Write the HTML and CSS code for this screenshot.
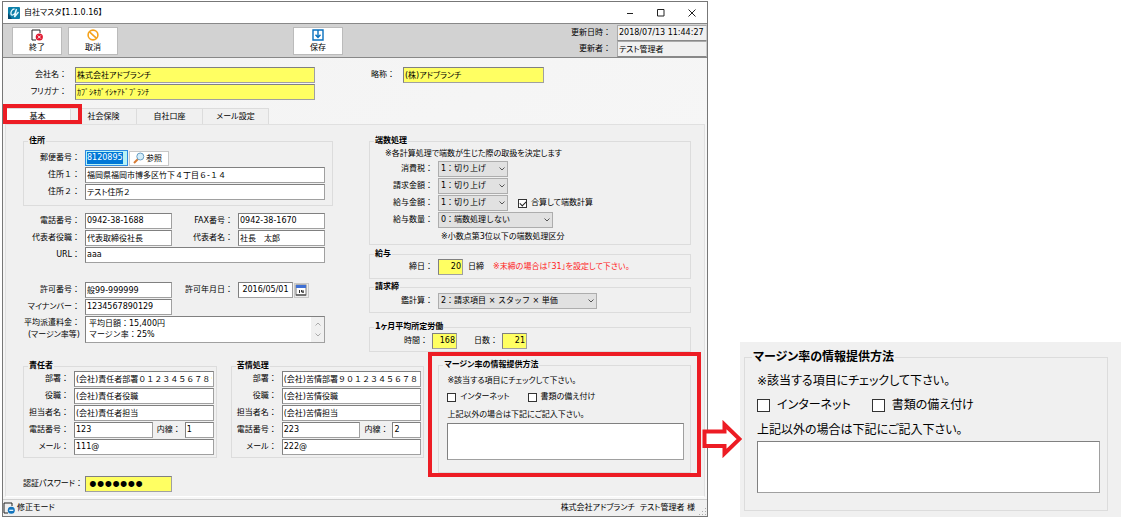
FILE: index.html
```html
<!DOCTYPE html>
<html lang="ja">
<head>
<meta charset="utf-8">
<title>自社マスタ</title>
<link rel="stylesheet" href="styles.css">
</head>
<body class="page">
<main class="window">
  <header class="titlebar">
    <svg class="app-icon" viewBox="0 0 12 12" aria-hidden="true"><rect width="12" height="12" rx="1" fill="#0b7fa9"/><path d="M0 12V6l4 6z" fill="#06496e"/><path d="M6.500 2C4 2 2.500 5 3 7s3 1 4-1l1.500-4L6.500 10l4-5" fill="none" stroke="#e4f7fd" stroke-width="1.300"/></svg>
    <h1 class="title kana">自社マスタ【1.1.0.16】</h1>
    <div class="win-buttons">
      <button class="win-button" aria-label="最小化"><svg viewBox="0 0 8 8"><path d="M1 4.5h6"/></svg></button>
      <button class="win-button" aria-label="最大化"><svg viewBox="0 0 8 8"><path d="M.5.5h6.5v6.5H.5z"/></svg></button>
      <button class="win-button" aria-label="閉じる"><svg viewBox="0 0 8 8"><path d="M.5.5l7 7M7.5.5l-7 7"/></svg></button>
    </div>
  </header>

  <div class="toolbar">
    <div class="tools">
      <button class="tool"><svg class="tool-icon" viewBox="0 0 12 12"><path d="M9 4V1H1v10h4" fill="none" stroke="#222"/><circle cx="8.3" cy="8" r="3.6" fill="#e0142c"/><path d="M6.8 6.5l3 3m0-3l-3 3" stroke="#fff"/></svg>終了</button>
      <button class="tool"><svg class="tool-icon" viewBox="0 0 12 12"><circle cx="6" cy="6" r="4.9" fill="none" stroke="#f5a21b" stroke-width="1.6"/><path d="M2.5 2.8l7 6.6" stroke="#f5a21b" stroke-width="1.6"/></svg>取消</button>
    </div>
    <button class="tool"><svg class="tool-icon" viewBox="0 0 12 12"><path d="M1 1h10v10H1z" fill="none" stroke="#0870be" stroke-width="1.400"/><path d="M6 1v7M3.500 5.800L6 8.400l2.500-2.600" fill="none" stroke="#0870be" stroke-width="1.400"/></svg>保存</button>
    <div class="stamp">
      <label for="updated">更新日時：</label><input id="updated" class="field readonly" readonly value="2018/07/13 11:44:27">
      <label for="updater">更新者：</label><input id="updater" class="field readonly kana" readonly value="テスト管理者">
    </div>
  </div>

  <section class="company">
    <label for="company">会社名：</label><input id="company" class="field required kana" value="株式会社アドブランチ">
    <label for="short">略称：</label><input id="short" class="field required kana" value="(株)アドブランチ">
    <label class="furigana" for="furigana"><span class="kana">フリガナ</span>：</label><input id="furigana" class="field required kana" value="ｶﾌﾞｼｷｶﾞｲｼｬｱﾄﾞﾌﾞﾗﾝﾁ">
  </section>

  <nav class="tabs" role="tablist">
    <button class="tab tab-active" role="tab" aria-selected="true">基本</button>
    <button class="tab" role="tab">社会保険</button>
    <button class="tab" role="tab">自社口座</button>
    <button class="tab kana" role="tab">メール設定</button>
  </nav>

  <div class="panel" role="tabpanel">
    <div class="upper">
      <div class="left">
        <fieldset class="group address">
          <legend>住所</legend>
          <div class="form">
            <label for="zip">郵便番号：</label>
            <div class="row wide zip-row"><input id="zip" class="field zip" value="8120895"><button class="lookup"><svg class="lookup-icon" viewBox="0 0 12 12"><path d="M1 11l4-4" stroke="#d77a32" stroke-width="2"/><circle cx="7.300" cy="4.500" r="3.500" fill="#d4eefb" stroke="#6b9fc4"/></svg>参照</button></div>
            <label for="addr1">住所１：</label><input id="addr1" class="field wide" value="福岡県福岡市博多区竹下４丁目６-１４">
            <label for="addr2">住所２：</label><input id="addr2" class="field wide kana" value="テスト住所２">
          </div>
        </fieldset>
        <div class="form">
          <label for="tel">電話番号：</label><input id="tel" class="field" value="0942-38-1688">
          <label for="fax">FAX番号：</label><input id="fax" class="field" value="0942-38-1670">
          <label for="role">代表者役職：</label><input id="role" class="field" value="代表取締役社長">
          <label for="rep">代表者名：</label><input id="rep" class="field" value="社長&#12288;太郎">
          <label for="url">URL：</label><input id="url" class="field wide" value="aaa">
        </div>
        <div class="form">
          <label for="permit">許可番号：</label><input id="permit" class="field" value="般99-999999">
          <label for="permit-date">許可年月日：</label>
          <div class="row"><input id="permit-date" class="field date" value="2016/05/01"><button class="calendar" aria-label="カレンダー"><svg viewBox="0 0 12 12"><rect x="1" y="1" width="10" height="10" fill="#fff" stroke="#777"/><path d="M1 1h10v3H1z" fill="#3f70d4"/><path d="M1 11h10" stroke="#333"/><path d="M4.500 6v3M6.500 6v2h2.500M8 6v3" stroke="#333" fill="none"/></svg></button></div>
          <label for="mynumber"><span class="kana">マイナンバー</span>：</label><input id="mynumber" class="field" value="1234567890129">
          <label class="two-line" for="fee">平均派遣料金：<br><span class="kana">(マージン率等)</span></label>
          <div class="wide memo"><textarea id="fee" class="field fee">平均日額：15,400円
マージン率：25%</textarea><div class="scroll" aria-hidden="true"><svg viewBox="0 0 6 4"><path d="M.5 3.500L3 1l2.500 2.500"/></svg><svg viewBox="0 0 6 4"><path d="M.5.5L3 3 5.500.5"/></svg></div></div>
        </div>
      </div>

      <div class="right">
        <fieldset class="group rounding">
          <legend>端数処理</legend>
          <p class="hint kana">※各計算処理で端数が生じた際の取扱を決定します</p>
          <div class="options">
            <label for="tax">消費税：</label><div class="row"><span class="select"><select id="tax"><option>1：切り上げ</option></select><svg viewBox="0 0 6 4"><path d="M.5.5L3 3 5.500.5"/></svg></span></div>
            <label for="bill">請求金額：</label><div class="row"><span class="select"><select id="bill"><option>1：切り上げ</option></select><svg viewBox="0 0 6 4"><path d="M.5.5L3 3 5.500.5"/></svg></span></div>
            <label for="pay">給与金額：</label><div class="row"><span class="select"><select id="pay"><option>1：切り上げ</option></select><svg viewBox="0 0 6 4"><path d="M.5.5L3 3 5.500.5"/></svg></span><label class="check sum kana"><input type="checkbox" checked>合算して端数計算</label></div>
            <label for="amount">給与数量：</label><div class="row"><span class="select select-mid"><select id="amount"><option>0：端数処理しない</option></select><svg viewBox="0 0 6 4"><path d="M.5.5L3 3 5.500.5"/></svg></span></div>
          </div>
          <p class="hint hint-deep kana">※小数点第3位以下の端数処理区分</p>
        </fieldset>
        <fieldset class="group">
          <legend>給与</legend>
          <div class="options">
            <label for="close">締日：</label><div class="row"><input id="close" class="field required num" value="20"><span class="unit">日締</span><span class="warning kana">※末締の場合は「31」を設定して下さい。</span></div>
          </div>
        </fieldset>
        <fieldset class="group billing">
          <legend>請求締</legend>
          <div class="options">
            <label for="cover">鑑計算：</label><div class="row"><span class="select select-long"><select id="cover"><option>2：請求項目 × スタッフ × 単価</option></select><svg viewBox="0 0 6 4"><path d="M.5.5L3 3 5.500.5"/></svg></span></div>
          </div>
        </fieldset>
        <fieldset class="group">
          <legend class="kana">1ヶ月平均所定労働</legend>
          <div class="row hours"><label for="hours">時間：</label><input id="hours" class="field required num" value="168"><label class="days" for="days">日数：</label><input id="days" class="field required num" value="21"></div>
        </fieldset>
      </div>
    </div>

    <div class="lower">
      <fieldset class="group person">
        <legend>責任者</legend>
        <div class="contact">
          <label for="m-dept">部署：</label><input id="m-dept" class="field" value="(会社)責任者部署０１２３４５６７８９">
          <label for="m-role">役職：</label><input id="m-role" class="field" value="(会社)責任者役職">
          <label for="m-name">担当者名：</label><input id="m-name" class="field" value="(会社)責任者担当">
          <label for="m-tel">電話番号：</label><div class="row"><input id="m-tel" class="field grow" value="123"><label class="ext" for="m-ext">内線：</label><input id="m-ext" class="field ext-field" value="1"></div>
          <label for="m-mail"><span class="kana">メール</span>：</label><input id="m-mail" class="field" value="111@">
        </div>
      </fieldset>
      <fieldset class="group person person-second">
        <legend>苦情処理</legend>
        <div class="contact">
          <label for="c-dept">部署：</label><input id="c-dept" class="field" value="(会社)苦情部署９０１２３４５６７８９">
          <label for="c-role">役職：</label><input id="c-role" class="field" value="(会社)苦情役職">
          <label for="c-name">担当者名：</label><input id="c-name" class="field" value="(会社)苦情担当">
          <label for="c-tel">電話番号：</label><div class="row"><input id="c-tel" class="field grow" value="223"><label class="ext" for="c-ext">内線：</label><input id="c-ext" class="field ext-field" value="2"></div>
          <label for="c-mail"><span class="kana">メール</span>：</label><input id="c-mail" class="field" value="222@">
        </div>
      </fieldset>
      <div class="callout">
        <fieldset class="group margin-info">
          <legend class="kana">マージン率の情報提供方法</legend>
          <p class="kana">※該当する項目にチェックして下さい。</p>
          <div class="checks"><label class="check kana"><input type="checkbox">インターネット</label><label class="check kana"><input type="checkbox">書類の備え付け</label></div>
          <label class="kana" for="other">上記以外の場合は下記にご記入下さい。</label>
          <textarea id="other" class="field other"></textarea>
        </fieldset>
      </div>
      <div class="row password-row">
        <label for="password"><span class="kana">認証パスワード</span>：</label><input id="password" class="field required password" type="password" value="1234567">
      </div>
    </div>
  </div>

  <footer class="status">
    <svg class="status-icon" viewBox="0 0 12 12" aria-hidden="true"><path d="M9 4V1H1v10h4" fill="none" stroke="#222"/><circle cx="8.300" cy="8.300" r="3.500" fill="#1475bd"/><path d="M6.300 8.300h4" stroke="#fff" stroke-width="1.200"/></svg>
    <span class="kana">修正モード</span>
    <span class="operator kana">株式会社アドブランチ&nbsp; テスト管理者 様</span>
    <svg class="grip" viewBox="0 0 8 8" aria-hidden="true"><path d="M6 0h1v1H6zM3 3h1v1H3zM6 3h1v1H6zM0 6h1v1H0zM3 6h1v1H3zM6 6h1v1H6z" fill="#aaa"/></svg>
  </footer>
</main>

<div class="pointer"><svg class="arrow" viewBox="0 0 40 38" aria-hidden="true"><path d="M2.500 11.500h20V4.500L37.500 19 22.500 33.500v-7.500h-20z" fill="#fff" stroke="#ed1c24" stroke-width="4"/></svg></div>

<aside class="enlarged">
  <fieldset class="group margin-info large">
    <legend class="kana">マージン率の情報提供方法</legend>
    <p class="kana">※該当する項目にチェックして下さい。</p>
    <div class="checks"><label class="check kana"><input type="checkbox">インターネット</label><label class="check kana"><input type="checkbox">書類の備え付け</label></div>
    <label class="kana" for="other-large">上記以外の場合は下記にご記入下さい。</label>
    <textarea id="other-large" class="field other"></textarea>
  </fieldset>
</aside>
</body>
</html>
```

FILE: styles.css
```css
*, *::before, *::after { box-sizing: border-box; }

.page {
  margin: 0;
  padding: 1px 16px 11px 2px;
  display: grid;
  grid-template-columns: minmax(0, 706fr) 32px minmax(0, 381fr);
  align-items: end;
  background: #fff;
  color: #000;
  font: 8px/16px "DejaVu Sans", "Noto Sans CJK JP", sans-serif;
  white-space: nowrap;
}

input, select, textarea, button { font: inherit; color: inherit; margin: 0; }
p { margin: 0; }
.kana { font-feature-settings: "palt"; }
.row { display: flex; align-items: center; }

/* window frame */
.window {
  border: 1px solid #777;
  background: linear-gradient(150deg, #f3f3f3, #f8f8f8);
}
.titlebar {
  display: flex;
  align-items: center;
  height: 21px;
  padding-left: 5px;
  gap: 4px;
  background: #fff;
}
.app-icon { width: 12px; height: 12px; }
.title { margin: 0; font-size: 8px; font-weight: 400; }
.win-buttons { margin-left: auto; display: flex; }
.win-button {
  width: 31px;
  height: 20px;
  padding: 0;
  border: 0;
  background: none;
  display: grid;
  place-items: center;
}
.win-button svg { width: 8px; height: 8px; fill: none; stroke: #222; }

/* toolbar */
.toolbar {
  display: grid;
  grid-template-columns: 290fr 50px 364fr;
  align-items: center;
  height: 35px;
  border: solid #888;
  border-width: 1px 0;
  background: #d2d2d2;
}
.tools { display: flex; gap: 6px; padding-left: 9px; }
.tool {
  width: 50px;
  height: 28px;
  padding: 0;
  border: 1px solid #bbb;
  background: #fff;
  display: flex;
  flex-direction: column;
  align-items: center;
  line-height: 13px;
}
.tool-icon { width: 12px; height: 12px; margin-top: 1px; }
.stamp {
  display: grid;
  grid-template-columns: 1fr 90px;
  column-gap: 6px;
  text-align: right;
}

/* shared fields */
.field {
  width: 100%;
  min-width: 0;
  height: 16px;
  padding: 0 1px 1px;
  border: 1px solid #808080;
  border-right-color: #a0a0a0;
  border-bottom-color: #a0a0a0;
  border-radius: 0;
  outline: 0;
  background: #fff;
  line-height: 13px;
}
.required { background: #ffff62; }
.readonly { background: #f0f0f0; border-color: #aaa #ccc #888 #aaa; }

.company {
  display: grid;
  grid-template-columns: 64px 240fr 72px 141fr 155fr;
  gap: 1px 8px;
  padding: 9px 0 8px;
  text-align: right;
}
.furigana { grid-column: 1; }

/* tabs */
.tabs { display: flex; padding-left: 2px; position: relative; }
.tabs::before {
  content: "";
  position: absolute;
  left: 0;
  top: -4px;
  width: 79px;
  height: 20px;
  border: 4px solid #ed1c24;
}
.tab {
  min-width: 66px;
  height: 16px;
  padding: 0;
  border: 1px solid #dcdcdc;
  border-width: 1px 1px 0 0;
  background: #f0f0f0;
  line-height: 15px;
}
.tab-active { background: #fff; }

.panel {
  margin: 0 2px 2px;
  padding: 11px 3px 4px 17px;
  border: 1px solid #e0e0e0;
  border-bottom-color: #fff;
  background: #f0f0f0;
}
.upper {
  display: grid;
  grid-template-columns: 312fr 322fr;
  column-gap: 34px;
  padding-right: 10px;
}

/* titled groups */
.group {
  min-width: 0;
  margin: 0;
  padding: 0;
  border: 1px solid #dcdcdc;
}
.group legend {
  margin-left: 4px;
  padding: 0 1px;
  height: 10px;
  line-height: 10px;
  font-weight: 700;
}
.form {
  display: grid;
  grid-template-columns: 57px minmax(0, 1fr) 56px minmax(0, 1fr);
  gap: 1px 5px;
  margin-right: 10px;
  text-align: right;
}
.left .form + .form { margin-top: 19px; }
.wide { grid-column: span 3; }
.address { padding-bottom: 5px; margin: 0 2px 7px 0; }
.address .form { margin: 4px 7px 0 -1px; }

.zip {
  width: 43px;
  border-color: #2d8ae0;
  color: #fff;
  background: linear-gradient(#0078d7, #0078d7) 1px 1px / 36px 12px no-repeat, #b8f2f4;
}
.zip-row { gap: 1px; }
.lookup, .calendar {
  height: 15px;
  padding: 0;
  border: 1px solid #c8c8c8;
  background: #fff;
  display: flex;
  align-items: center;
  line-height: 13px;
}
.lookup { width: 40px; gap: 1px; padding-left: 3px; }
.lookup-icon { width: 12px; height: 12px; }
.date { width: 55px; text-align: center; }
.calendar { width: 15px; margin-left: 1px; background: #eee; }
.calendar svg { width: 12px; height: 12px; }

.two-line { grid-column: 1; justify-self: end; line-height: 12px; padding-top: 1px; }
.memo { position: relative; display: flex; }
.fee { height: 27px; padding: 1px 3px; line-height: 11px; resize: none; overflow: hidden; }
.scroll {
  position: absolute;
  inset: 1px 1px 1px auto;
  width: 13px;
  display: flex;
  flex-direction: column;
  align-items: center;
  justify-content: space-between;
  padding: 5px 0;
  background: #f0f0f0;
}
.scroll svg { width: 6px; height: 4px; fill: none; stroke: #aaa; }

/* right column */
.rounding { margin-bottom: 4px; }
.hint { padding: 2px 0 0 15px; line-height: 12px; }
.hint-deep { padding: 2px 0 0 71px; line-height: 14px; }
.options {
  display: grid;
  grid-template-columns: 63px 1fr;
  gap: 1px 5px;
  padding-bottom: 3px;
  text-align: right;
}
.rounding > .options { padding: 1px 0 0; }
.billing > .options { padding: 1px 0 3px; }
.select { position: relative; display: flex; width: 70px; }
.select-mid { width: 115px; }
.select-long { width: 159px; }
.select select {
  width: 100%;
  height: 16px;
  padding: 0 2px;
  border: 1px solid #adadad;
  border-radius: 0;
  background: #e1e1e1;
  appearance: none;
  line-height: 14px;
}
.select svg {
  position: absolute;
  right: 3px;
  top: 6px;
  width: 6px;
  height: 4px;
  fill: none;
  stroke: #555;
  pointer-events: none;
}
.check { display: flex; align-items: center; gap: 4px; }
.sum { margin-left: 10px; }
.check input {
  appearance: none;
  width: 9px;
  height: 9px;
  border: 1px solid #333;
  background: #fff;
  display: grid;
  place-items: center;
}
.check input:checked::after {
  content: "";
  width: 6px;
  height: 4px;
  border: solid #222;
  border-width: 0 0 1px 1px;
  transform: rotate(-45deg);
}
.num { width: 25px; text-align: right; }
.unit { margin-left: 5px; }
.warning { margin-left: 9px; color: #ff1c1c; }
.billing { margin: 3px 0 9px; }
.hours { padding: 1px 0 2px 34px; gap: 4px; }
.days { margin-left: 13px; }

/* contacts and callout */
.lower {
  display: grid;
  grid-template-columns: 194fr 14px 194fr 4px 273fr;
  grid-template-rows: auto auto;
  align-items: start;
}
.person { margin: 9px 0 0; }
.person-second { grid-column: 3; }
.contact {
  display: grid;
  grid-template-columns: 45px minmax(0, 1fr);
  gap: 1px 5px;
  padding: 0 2px 2px 0;
  text-align: right;
}
.ext { margin: 0 4px; }
.grow { flex: 1; }
.ext-field { flex: none; width: 29px; }
.callout {
  grid-column: 5;
  grid-row: 1 / span 2;
  border: 4px solid #ed1c24;
  padding: 4px 6px 0;
}
.margin-info { padding: 0 6px 12px 8px; }
.margin-info legend { margin-left: -4px; }
.margin-info p { padding-top: 3px; }
.checks { display: flex; gap: 18px; }
.margin-info > label { display: block; padding-top: 2px; }
.other { display: block; height: 37px; resize: none; }
.password-row { grid-column: 1 / span 4; grid-row: 2; gap: 2px; margin-top: 18px; }
.password {
  width: 87px;
  padding: 0 3px;
  font-family: "Liberation Sans", sans-serif;
  font-size: 22px;
}

.status {
  display: flex;
  align-items: center;
  gap: 2px;
  height: 17px;
  border-top: 1px solid #d0d0d0;
  background: #f0f0f0;
}
.status-icon { width: 12px; height: 12px; }
.operator { margin-left: auto; }
.grip { width: 8px; height: 8px; align-self: end; margin-left: 2px; }

/* enlarged detail */
.pointer { position: relative; height: 97px; }
.arrow { position: absolute; left: -6px; top: 0; width: 40px; height: 38px; z-index: 1; }
.enlarged {
  background: #f0f0f0;
  padding: 7px 13px 6px 4px;
  font-size: 12px;
  line-height: 24px;
}
.large { padding: 0 7px 17px 12px; }
.large legend { height: 16px; line-height: 16px; margin-left: -5px; }
.large p { padding-top: 4px; }
.large > label { padding-top: 3px; line-height: 21px; }
.large .check { gap: 7px; }
.large .check input { width: 13px; height: 13px; }
.large .checks { gap: 21px; }
.large .other { height: 52px; }
```
